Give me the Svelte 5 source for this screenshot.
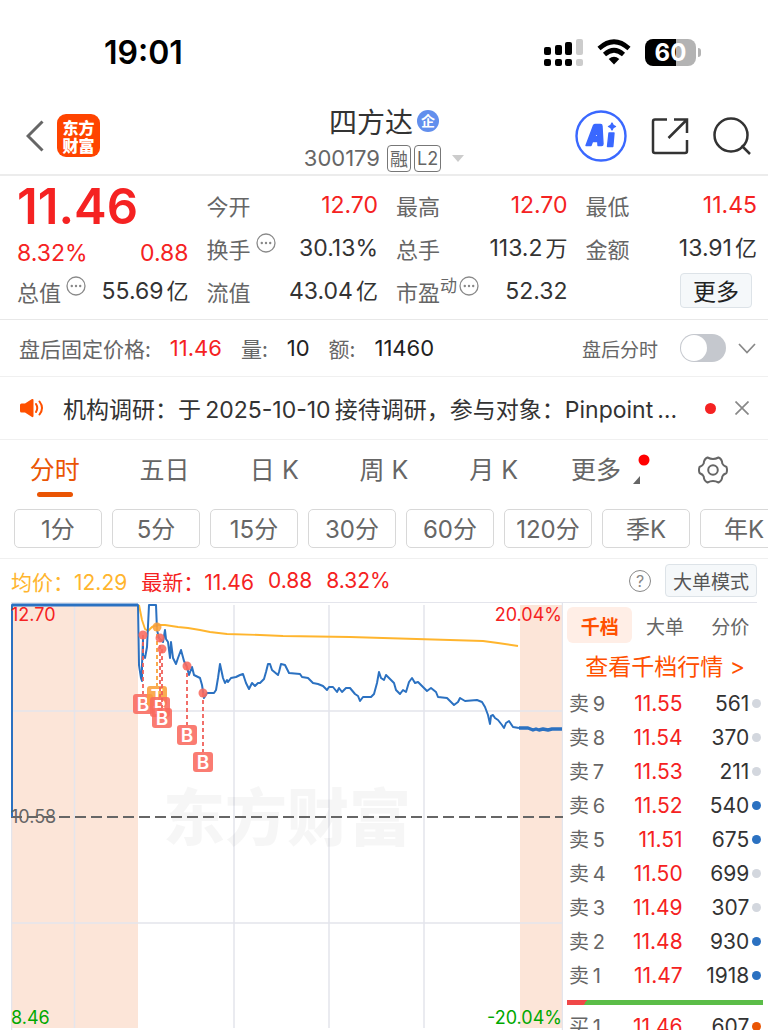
<script lang="ts">
    let period: string = "分时";
    let book: string = "千档";
    let afterHours: boolean = false;
    let showNotice: boolean = true;

    const quoteColumns = [
        [
            { label: "今开", value: "12.70", red: true },
            { label: "换手", value: "30.13%", info: true },
            { label: "流值", value: "43.04", unit: "亿" },
        ],
        [
            { label: "最高", value: "12.70", red: true },
            { label: "总手", value: "113.2", unit: "万" },
            { label: "市盈", sup: "动", value: "52.32", info: true },
        ],
        [
            { label: "最低", value: "11.45", red: true },
            { label: "金额", value: "13.91", unit: "亿" },
        ],
    ];

    const periods = ["分时", "五日", "日 K", "周 K", "月 K"];
    const minutes = ["1分", "5分", "15分", "30分", "60分", "120分", "季K", "年K"];
    const books = ["千档", "大单", "分价"];

    const sells = [
        { level: 9, price: "11.55", amount: 561, dot: "gray" },
        { level: 8, price: "11.54", amount: 370, dot: "gray" },
        { level: 7, price: "11.53", amount: 211, dot: "gray" },
        { level: 6, price: "11.52", amount: 540, dot: "blue" },
        { level: 5, price: "11.51", amount: 675, dot: "blue" },
        { level: 4, price: "11.50", amount: 699, dot: "gray" },
        { level: 3, price: "11.49", amount: 307, dot: "gray" },
        { level: 2, price: "11.48", amount: 930, dot: "blue" },
        { level: 1, price: "11.47", amount: 1918, dot: "blue" },
    ];
    const buys = [{ level: 1, price: "11.46", amount: 607, dot: "orange" }];

    const priceLine =
        "1,214 1,2 127,2 128,62 130,75 131,78 131,62 132,36 132,52 134,55 136,44 138,2 145,2 146,27 148,35 " +
        "150,37 152,39 154,27 155,36 157,39 159,55 160,39 162,55 165,61 167,55 170,47 173,58 176,64 178,72 " +
        "181,64 183,72 189,75 191,82 193,95 196,90 203,90 205,87 207,75 209,61 212,75 214,80 216,77 217,79 " +
        "220,75 225,74 229,72 232,71 235,80 238,86 241,80 244,83 247,80 249,80 253,76 255,69 257,61 259,61 " +
        "261,67 267,72 268,69 270,61 274,62 276,66 278,70 289,71 291,74 297,75 302,80 307,81 312,83 316,87 " +
        "318,84 322,84 326,89 328,85 331,89 335,85 339,85 344,91 347,93 349,98 352,94 360,94 363,91 366,80 " +
        "368,69 370,75 373,77 375,72 379,76 383,80 385,87 389,91 392,87 395,89 398,79 401,75 404,80 407,79 " +
        "412,84 416,88 420,85 425,89 427,94 436,95 440,99 443,102 447,99 449,95 454,98 466,97 471,99 474,104 " +
        "477,112 479,121 480,113 482,112 484,115 487,117 491,122 493,125 495,120 498,118 502,124 508,125";
    const closeLine = "508,125 517,125 522,127 525,126 528,127 532,126 537,127 541,126 551,126";
    const averageLine =
        "128,2 131,17 134,26 137,28 141,24 146,22 154,22 167,24 177,25 189,27 199,29 216,31 249,32 " +
        "272,33 339,34 372,35 439,37 472,38 487,40 507,43";

    const trades = [
        { x: 132, y: 32, badge: 101, type: "B" },
        { x: 146, y: 24, badge: 93, type: "T" },
        { x: 149, y: 35, badge: 104, type: "B" },
        { x: 151, y: 46, badge: 115, type: "B" },
        { x: 176, y: 63, badge: 132, type: "B" },
        { x: 192, y: 90, badge: 159, type: "B" },
    ];
</script>

{#snippet info()}
    <svg class="info" width="20" height="20" viewBox="0 0 20 20">
        <circle cx="10" cy="10" r="9" fill="none" stroke="#8a8a8a" stroke-width="1.3" />
        <circle cx="5.8" cy="10" r="1.2" fill="#888" />
        <circle cx="10" cy="10" r="1.2" fill="#888" />
        <circle cx="14.2" cy="10" r="1.2" fill="#888" />
    </svg>
{/snippet}

{#snippet level(side, row)}
    <tr>
        <th scope="row">{side}&thinsp;{row.level}</th>
        <td class="red">{row.price}</td>
        <td>{row.amount}</td>
        <td class="mark"><i class={row.dot}></i></td>
    </tr>
{/snippet}

<div class="app">
    <div class="status">
        <span class="time">19:01</span>
        <div class="signals">
            <svg width="40" height="28" viewBox="0 0 40 28">
                <rect x="1" y="9" width="7" height="8" rx="2" />
                <rect x="12" y="7" width="7" height="10" rx="2" />
                <rect x="22" y="4" width="7" height="13" rx="2" />
                <rect x="33" y="1" width="7" height="16" rx="2" fill="#ccc" />
                <rect x="1" y="21" width="7" height="7" rx="2" />
                <rect x="12" y="21" width="7" height="7" rx="2" />
                <rect x="22" y="21" width="7" height="7" rx="2" />
                <rect x="33" y="21" width="7" height="7" rx="2" fill="#ccc" />
            </svg>
            <svg width="34" height="26" viewBox="0 0 34 26">
                <path d="M2 9.5 Q17 -4 32 9.5" fill="none" stroke="#000" stroke-width="4.6" />
                <path d="M7.5 15.5 Q17 7 26.5 15.5" fill="none" stroke="#000" stroke-width="4.6" />
                <path d="M17 25.5 L11.7 20 Q17 15.5 22.3 20 Z" />
            </svg>
            <div class="battery"><b>60</b></div>
        </div>
    </div>

    <header class="nav">
        <div class="left">
            <button class="icon" aria-label="返回">
                <svg width="18" height="32" viewBox="0 0 18 32">
                    <path d="M16.5 1.5 L2 16 L16.5 30.5" fill="none" stroke="#666" stroke-width="3" />
                </svg>
            </button>
            <div class="logo"><span>东方</span><span>财富</span></div>
        </div>
        <div class="title">
            <h1>四方达<span class="badge">企</span></h1>
            <div class="code">
                300179<span class="tag rong">融</span><span class="tag">L2</span>
                <svg width="12" height="7" viewBox="0 0 12 7"><path d="M0 0 H12 L6 7 Z" fill="#ccc" /></svg>
            </div>
        </div>
        <div class="right">
            <button class="icon" aria-label="Ai">
                <svg width="52" height="52" viewBox="0 0 52 52">
                    <circle cx="26" cy="26" r="24.5" fill="none" stroke="#3a68ff" stroke-width="2.4" />
                    <g fill="#3a68ff" stroke="#3a68ff" stroke-width="1.4" stroke-linejoin="round">
                        <path fill-rule="evenodd" d="M11 35.500 L18.500 15.500 Q19 14.500 20.500 14.500 L25.500 14.500 Q27 14.500 27 16 L28 34 Q28 35.500 26.500 35.500 L23 35.500 L22.800 31.500 L17.500 31.500 L16 35.500 Z M19.500 26.800 L22.600 26.800 L22.300 21.500 Z" />
                        <path d="M34 23 H39 L37.800 36.500 H32.500 Z" />
                        <path d="M37 13 L38.2 15.3 L40.5 16.5 L38.2 17.7 L37 20 L35.8 17.7 L33.5 16.5 L35.8 15.3 Z" />
                    </g>
                </svg>
            </button>
            <button class="icon" aria-label="分享">
                <svg width="38" height="38" viewBox="0 0 38 38" fill="none" stroke="#333" stroke-width="2.5">
                    <path d="M16 2.5 H4 Q2 2.5 2 4.5 V34 Q2 36 4 36 H34 Q36 36 36 34 V23" />
                    <path d="M23 2.5 H36 V16 M36 2.5 L17.5 21" />
                </svg>
            </button>
            <button class="icon" aria-label="搜索">
                <svg width="38" height="38" viewBox="0 0 38 38" fill="none" stroke="#333" stroke-width="2.5">
                    <circle cx="18" cy="18" r="16.5" />
                    <path d="M28.5 28.5 L37 37" />
                </svg>
            </button>
        </div>
    </header>

    <section class="quote">
        <div class="column">
            <strong class="price">11.46</strong>
            <div class="change red"><span>8.32%</span><span>0.88</span></div>
            <div class="cell">
                <span class="label">总值{@render info()}</span>
                <span>55.69<span class="unit">亿</span></span>
            </div>
        </div>
        {#each quoteColumns as column, i}
            <div class="column">
                {#each column as cell}
                    <div class="cell">
                        <span class="label">
                            {cell.label}{#if cell.sup}<sup>{cell.sup}</sup>{/if}{#if cell.info}{@render info()}{/if}
                        </span>
                        <span class:red={cell.red}>{cell.value}{#if cell.unit}<span class="unit">{cell.unit}</span>{/if}</span>
                    </div>
                {/each}
                {#if i == 2}
                    <div class="cell end"><button class="more">更多</button></div>
                {/if}
            </div>
        {/each}
    </section>

    <section class="after">
        <span>盘后固定价格:</span><b class="red">11.46</b>
        <span>量:</span><b>10</b>
        <span>额:</span><b>11460</b>
        <label class="switch">
            盘后分时
            <input type="checkbox" bind:checked={afterHours} />
        </label>
        <button class="icon" aria-label="展开">
            <svg width="18" height="11" viewBox="0 0 18 11"><path d="M1 1 L9 9.5 L17 1" fill="none" stroke="#888" stroke-width="1.7" /></svg>
        </button>
    </section>

    {#if showNotice}
        <section class="notice">
            <svg width="24" height="20" viewBox="0 0 24 20" fill="#ff5000">
                <path d="M1.5 5.5 H5 L12 1 Q13.5 .5 13.5 2 V18 Q13.5 19.5 12 19 L5 14.5 H1.5 Q0 14.5 0 13 V7 Q0 5.5 1.5 5.5 Z" />
                <path d="M16 6 Q18.5 10 16 14 M19.5 3.5 Q24.5 10 19.5 16.5" fill="none" stroke="#ff5000" stroke-width="2" stroke-linecap="round" />
            </svg>
            <a href="#notice">机构调研：于&thinsp;2025-10-10&thinsp;接待调研，参与对象：Pinpoint&thinsp;…</a>
            <i class="dot"></i>
            <button class="icon" aria-label="关闭" on:click={() => (showNotice = false)}>
                <svg width="14" height="14" viewBox="0 0 14 14"><path d="M.5 .5 L13.5 13.5 M13.5 .5 L.5 13.5" stroke="#888" stroke-width="1.7" /></svg>
            </button>
        </section>
    {/if}

    <nav class="tabs">
        {#each periods as item}
            <button class:active={period == item} on:click={() => (period = item)}>{item}</button>
        {/each}
        <button class="others">
            更多
            <svg width="20" height="32" viewBox="0 0 20 32">
                <circle cx="14" cy="6" r="5.5" fill="#f00" />
                <path d="M10 22 V30 H3 Z" fill="#666" />
            </svg>
        </button>
        <button aria-label="设置">
            <svg width="30" height="28" viewBox="0 0 30 28" fill="none" stroke="#666" stroke-width="2" stroke-linejoin="round">
                <path d="M9.5 1.5 Q15 4.5 20.5 1.5 Q24 3 24.3 7.5 Q25 9.5 28.5 11 Q29.5 14 28.5 17 Q25 18.5 24.3 20.5 Q24 25 20.5 26.5 Q15 23.5 9.5 26.5 Q6 25 5.7 20.5 Q5 18.5 1.5 17 Q.5 14 1.5 11 Q5 9.5 5.7 7.5 Q6 3 9.5 1.5 Z" />
                <circle cx="15" cy="14" r="4.8" />
            </svg>
        </button>
    </nav>

    <div class="minutes">
        {#each minutes as item}
            <button>{item}</button>
        {/each}
    </div>

    <div class="summary">
        <span class="average">均价：12.29</span>
        <span>最新：11.46</span>
        <span>0.88</span>
        <span>8.32%</span>
        <button class="help" aria-label="帮助">?</button>
        <button class="mode">大单模式</button>
    </div>

    <main class="market">
        <svg class="chart" viewBox="0 0 552 427">
            <rect x="0" y="2" width="127" height="423" fill="#fce5d8" />
            <rect x="509" y="2" width="43" height="423" fill="#fce5d8" />
            <g stroke="#e4e5ec" stroke-width="1.5">
                <path d="M63.5 2 V425 M223 2 V425 M318 2 V425 M413 2 V425 M0 108 H552 M0 320 H552" />
                <path d="M.5 0 V427 M551.5 0 V427" />
            </g>
            <text class="watermark" x="152" y="238">东方财富</text>
            <path d="M0 214 H552" stroke="#666" stroke-width="2" stroke-dasharray="11 5" />
            <polyline points={averageLine} fill="none" stroke="#ffb52e" stroke-width="1.9" stroke-linejoin="round" />
            <polyline points={priceLine} fill="none" stroke="#2b71c1" stroke-width="2" stroke-linejoin="round" />
            <path d="M1 2 H127" stroke="#2b71c1" stroke-width="3" />
            <polyline points={closeLine} fill="none" stroke="#2b71c1" stroke-width="3.4" stroke-linejoin="round" />
            {#each trades as trade}
                <g class="trade" class:both={trade.type == "T"}>
                    <path d="M{trade.x} {trade.y} V{trade.badge - 10}" stroke-width="1.8" stroke-dasharray="4 3" />
                    <circle cx={trade.x} cy={trade.y} r="4.5" />
                    <rect x={trade.x - 10} y={trade.badge - 10} width="20" height="20" rx="3" />
                    <text x={trade.x} y={trade.badge + 7} text-anchor="middle">{trade.type}</text>
                </g>
            {/each}
            <text x="0" y="18" fill="#f52222">12.70</text>
            <text x="551" y="18" fill="#f52222" text-anchor="end">20.04%</text>
            <text x="0" y="220" fill="#666">10.58</text>
            <text x="0" y="421" fill="#00a800">8.46</text>
            <text x="551" y="421" fill="#00a800" text-anchor="end">-20.04%</text>
        </svg>

        <aside class="side">
            <div class="books">
                {#each books as item}
                    <button class:active={book == item} on:click={() => (book = item)}>{item}</button>
                {/each}
            </div>
            <a class="depth" href="#depth">查看千档行情 &gt;</a>
            <table>
                <tbody>
                    {#each sells as row}
                        {@render level("卖", row)}
                    {/each}
                </tbody>
            </table>
            <div class="ratio"></div>
            <table>
                <tbody>
                    {#each buys as row}
                        {@render level("买", row)}
                    {/each}
                </tbody>
            </table>
        </aside>
    </main>
</div>

<style>
    :global(body) {
        background: #fff;
    }
    * {
        box-sizing: border-box;
    }
    .app {
        height: 100vh;
        overflow: hidden;
        font-family: Inter, "Noto Sans CJK SC", sans-serif;
        font-size: 23px;
        color: #333;
    }
    button {
        padding: 0;
        border: none;
        background: none;
        font: inherit;
        color: inherit;
        white-space: nowrap;
        cursor: pointer;
    }
    a {
        color: inherit;
        text-decoration: none;
    }
    svg {
        flex: none;
        display: block;
    }
    .icon {
        display: flex;
    }
    .red {
        color: #f52222;
    }

    .status {
        height: 95px;
        padding: 9px 72px 0 104px;
        display: flex;
        align-items: center;
        justify-content: space-between;
        color: #000;
    }
    .time {
        font-size: 32px;
        font-weight: 600;
    }
    .signals {
        display: flex;
        align-items: center;
        gap: 14px;
    }
    .battery {
        position: relative;
        width: 51px;
        height: 27px;
        border-radius: 8px;
        background: linear-gradient(90deg, #000 60%, #b3b3b3 60%);
        color: #fff;
        font-size: 24px;
        line-height: 27px;
        text-align: center;
    }
    .battery::after {
        content: "";
        position: absolute;
        right: -5px;
        top: 9px;
        width: 3px;
        height: 9px;
        border-radius: 0 4px 4px 0;
        background: #b3b3b3;
    }

    .nav {
        height: 81px;
        padding: 0 17px;
        display: grid;
        grid-template-columns: 1fr auto 1fr;
        align-items: center;
        border-bottom: 2px solid #ececec;
    }
    .left,
    .right {
        display: flex;
        align-items: center;
    }
    .left {
        gap: 13px;
        padding-left: 9px;
    }
    .right {
        justify-content: flex-end;
        gap: 24px;
    }
    .logo {
        width: 43px;
        height: 43px;
        display: flex;
        flex-direction: column;
        align-items: center;
        justify-content: center;
        border-radius: 9px;
        background: #ff4400;
        color: #fff;
        font-family: "Noto Sans CJK SC", sans-serif;
        font-size: 16px;
        font-weight: 900;
        line-height: 18px;
    }
    .title {
        padding-top: 7px;
    }
    h1 {
        margin: 0;
        display: flex;
        align-items: center;
        justify-content: center;
        gap: 4px;
        font-family: "Noto Sans CJK SC", sans-serif;
        font-size: 28px;
        font-weight: 400;
        line-height: 38px;
    }
    .badge {
        width: 22px;
        height: 22px;
        border-radius: 50%;
        background: #628fed;
        color: #fff;
        font-size: 14px;
        font-weight: 700;
        line-height: 21px;
        text-align: center;
    }
    .code {
        display: flex;
        align-items: center;
        gap: 3px;
        font-size: 22px;
        line-height: 36px;
        color: #666;
    }
    .tag {
        height: 27px;
        padding: 0 2px;
        border: 1px solid #777;
        border-radius: 4px;
        font-size: 18px;
        line-height: 25px;
    }
    .rong {
        margin-left: 4px;
        font-family: "Noto Sans CJK SC", sans-serif;
    }
    .code svg {
        margin-left: 8px;
    }

    .quote {
        padding: 7px 11px 7px 17px;
        display: grid;
        grid-template-columns: repeat(4, 1fr);
        gap: 18px;
        border-bottom: 1px solid #e8e8e8;
    }
    .price {
        display: block;
        height: 48px;
        font-size: 49px;
        font-weight: 600;
        line-height: 48px;
        color: #f52222;
    }
    .change {
        height: 38px;
        padding-top: 6px;
        display: flex;
        align-items: center;
        justify-content: space-between;
    }
    .cell {
        height: 43px;
        display: flex;
        align-items: center;
        justify-content: space-between;
        line-height: 32px;
        white-space: nowrap;
    }
    .end {
        justify-content: flex-end;
        padding-right: 5px;
    }
    .label {
        display: flex;
        align-items: center;
        font-family: "Noto Sans CJK SC", sans-serif;
        font-size: 22px;
        color: #666;
    }
    .label sup {
        font-size: 17px;
        line-height: 17px;
        padding-bottom: 12px;
    }
    .info {
        margin: 0 0 9px 5px;
    }
    sup + .info {
        margin-left: 2px;
    }
    .unit {
        margin-left: 3px;
        font-size: 22px;
    }
    .more {
        width: 72px;
        height: 35px;
        border: 1px solid #dde3e8;
        border-radius: 4px;
        background: #f5f8fa;
        color: #222;
        font-family: "Noto Sans CJK SC", sans-serif;
        line-height: 33px;
    }

    .after {
        height: 57px;
        padding: 0 12px 0 19px;
        display: flex;
        align-items: center;
        border-bottom: 1px solid #f0f0f0;
        font-family: "Noto Sans CJK SC", sans-serif;
        font-size: 21px;
        color: #666;
    }
    .after b {
        margin: 0 19px;
        font-family: Inter, sans-serif;
        font-size: 22px;
        font-weight: 400;
        color: #222;
    }
    .after b.red {
        color: #f52222;
    }
    .switch {
        margin: 0 12px 0 auto;
        display: flex;
        align-items: center;
        gap: 22px;
        font-size: 19px;
    }
    .switch input {
        appearance: none;
        width: 46px;
        height: 28px;
        margin: 0;
        border-radius: 14px;
        background: #c5c8ce;
    }
    .switch input::before {
        content: "";
        display: block;
        width: 26px;
        height: 26px;
        margin: 1px;
        border-radius: 50%;
        background: #fff;
    }
    .switch input:checked {
        background: #ff5000;
    }
    .switch input:checked::before {
        margin-left: 19px;
    }

    .notice {
        height: 63px;
        padding: 0 19px 0 20px;
        display: flex;
        align-items: center;
        border-bottom: 1px solid #f0f0f0;
    }
    .notice a {
        flex: 1;
        min-width: 0;
        margin: 0 25px 0 19px;
        overflow: hidden;
        white-space: nowrap;
        text-overflow: ellipsis;
    }
    .dot {
        width: 11px;
        height: 11px;
        margin-right: 19px;
        border-radius: 50%;
        background: #f52222;
    }

    .tabs {
        height: 62px;
        display: grid;
        grid-template-columns: repeat(7, 1fr);
        font-size: 25px;
        color: #666;
    }
    .tabs button {
        position: relative;
        padding-bottom: 2px;
        display: flex;
        align-items: center;
        justify-content: center;
        line-height: 32px;
    }
    .tabs .active {
        color: #ea5504;
    }
    .tabs .active::after {
        content: "";
        position: absolute;
        bottom: 5px;
        width: 36px;
        height: 5px;
        border-radius: 3px;
        background: #ea5504;
    }
    .tabs .others {
        padding-left: 14px;
        gap: 9px;
    }

    .minutes {
        height: 57px;
        padding: 7px 0 10px 14px;
        display: flex;
        gap: 10px;
        overflow: hidden;
        border-bottom: 1px solid #f0f0f0;
        font-size: 24px;
        color: #666;
    }
    .minutes button {
        flex: 0 0 88px;
        padding-bottom: 2px;
        border: 1px solid #d8d8d8;
        border-radius: 5px;
    }

    .summary {
        height: 44px;
        margin: 0 11px;
        display: flex;
        align-items: center;
        gap: 14px;
        border-bottom: 1px solid #e4e5ec;
        font-size: 21px;
        color: #f52222;
        white-space: nowrap;
    }
    .average {
        color: #ffb52e;
    }
    .help {
        width: 22px;
        height: 22px;
        margin-left: auto;
        border: 1px solid #888;
        border-radius: 50%;
        color: #888;
        font-size: 16px;
        line-height: 20px;
    }
    .mode {
        height: 33px;
        padding: 0 7px;
        border: 1px solid #dde3e8;
        border-radius: 4px;
        background: #f5f8fa;
        color: #555;
        font-family: "Noto Sans CJK SC", sans-serif;
        font-size: 19px;
        line-height: 31px;
    }

    .market {
        padding: 0 5px 0 11px;
        display: flex;
        align-items: flex-start;
    }
    .chart {
        flex: 1;
        min-width: 0;
        font-size: 18px;
    }
    .watermark {
        font-size: 62px;
        font-weight: 900;
        fill: #000;
        fill-opacity: 0.035;
    }
    .trade circle,
    .trade rect {
        fill: #f96a5f;
        fill-opacity: 0.88;
    }
    .trade path {
        stroke: #f0605a;
    }
    .trade text {
        fill: #fff;
        font-size: 19px;
        font-weight: 600;
    }
    .both circle,
    .both rect {
        fill: #f9a13a;
    }
    .both path {
        stroke: #f9a13a;
    }

    .side {
        flex: 0 0 200px;
        padding-left: 4px;
    }
    .books {
        padding-top: 4px;
        display: grid;
        grid-template-columns: repeat(3, 1fr);
        font-family: "Noto Sans CJK SC", sans-serif;
        font-size: 19px;
        color: #666;
    }
    .books button {
        height: 36px;
        border-radius: 6px;
    }
    .books .active {
        background: #ffeee6;
        color: #ff5000;
        font-weight: 700;
    }
    .depth {
        display: block;
        height: 44px;
        line-height: 48px;
        text-align: center;
        color: #ff5000;
        white-space: nowrap;
    }
    table {
        width: 100%;
        border-collapse: collapse;
        table-layout: fixed;
        font-size: 21px;
    }
    th,
    td {
        height: 34px;
        padding: 0;
        line-height: 34px;
        text-align: right;
        white-space: nowrap;
    }
    th {
        width: 25%;
        padding-left: 2px;
        font-size: 20px;
        font-weight: 400;
        text-align: left;
        color: #666;
    }
    .mark {
        width: 7%;
        padding-right: 2px;
    }
    .mark i {
        display: inline-block;
        width: 9px;
        height: 9px;
        border-radius: 50%;
        vertical-align: 3px;
    }
    .gray {
        background: #d3d7de;
    }
    .blue {
        background: #2b71c1;
    }
    .orange {
        background: #ea5504;
    }
    .ratio {
        height: 5px;
        margin: 7px 0 5px;
        background: linear-gradient(120deg, #f04848 10%, #5bbd48 10%);
    }
</style>
